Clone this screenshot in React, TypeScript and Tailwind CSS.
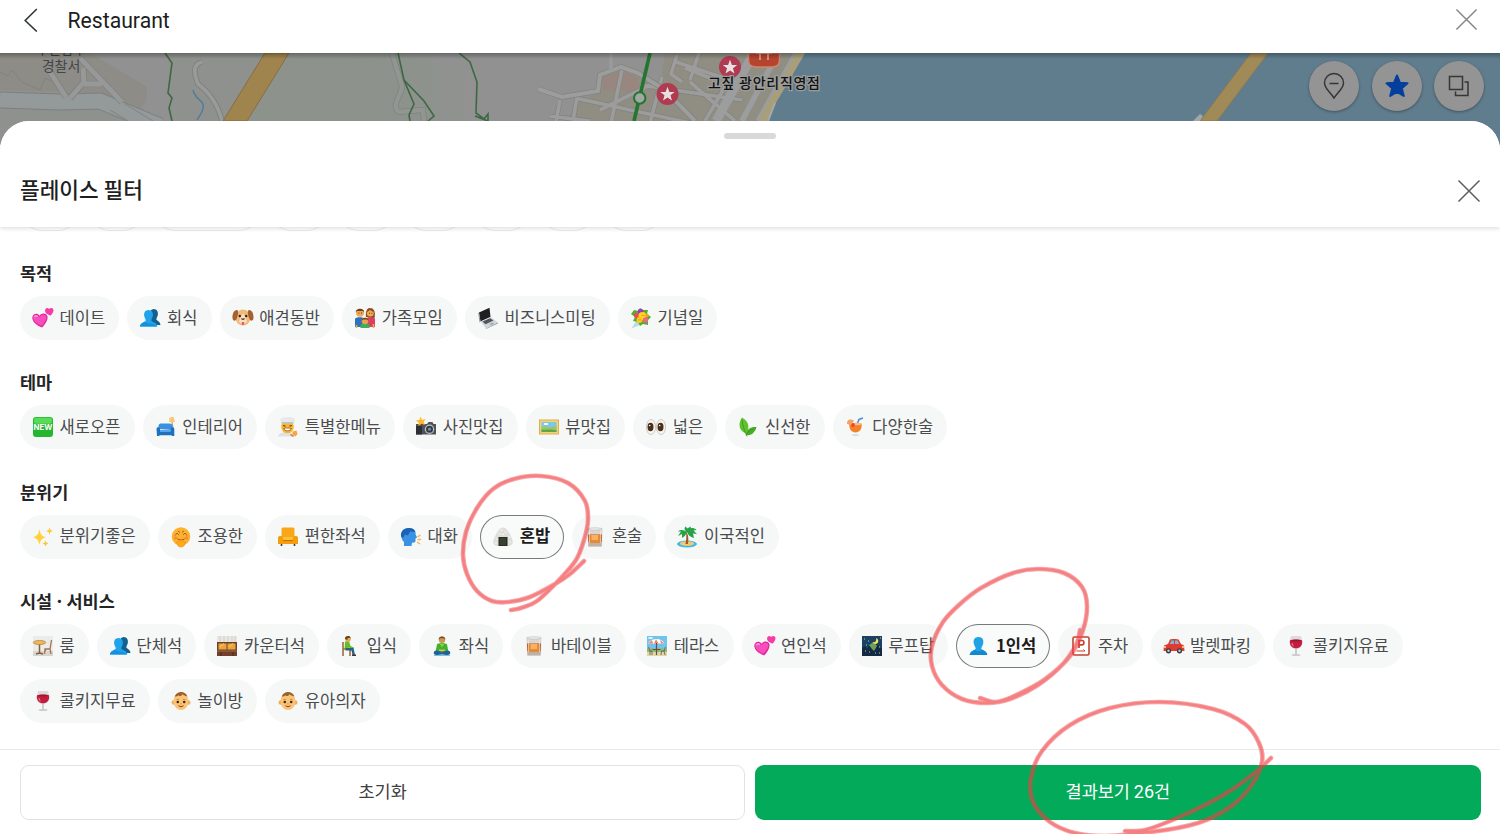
import React from "react";

const icons: Record<string, React.ReactNode> = {
  hearts: (
    <g transform="translate(-1 -1.800) scale(1.070)">
      <path d="M10.500 20.800C5 19 1.200 15.500 1.200 11.500 1.500 7.800 6 6.800 8 9.800 9.800 6.600 15 7 15.500 10.800 15.700 14.500 13 18 10.500 20.800Z" fill="#dc2a9a" />
      <path d="M9.800 19.300C5 17.300 2 14.500 2 11.500 2.200 8.800 5.800 8.300 8 11.200 9.800 8 13.800 8.200 14.300 11 14.500 14 12 17 9.800 19.300Z" fill="#fb4cbd" />
      <path d="M3.300 11.200C3.700 9.800 5.200 9.500 6.300 10.600" stroke="#ffa8e5" strokeWidth="1.200" fill="none" />
      <path d="M18.300 9.700C15 8.700 12.800 7 13.200 4.500 13.600 2.300 16 2 16.900 3.600 18.500 1.700 21.400 2.700 21 5.100 20.600 7.200 19.300 8.500 18.300 9.700Z" fill="#f73aa6" />
    </g>
  ),
  busts: (
    <>
      <path d="M14.500 2C18.200 2 19.300 5 18.800 8 18.500 10 17.300 11 17.300 12.500 18.500 14 21 14.200 21.500 18H12V3Z" fill="#14608f" />
      <path d="M9.500 3C13.200 3 14.300 6 13.800 9 13.500 11 12.300 12 12.300 13.600 13.500 15.500 17.800 15.500 18.300 19.500H1C1.400 15.700 5.500 15.500 6.800 13.600 6.800 12 5.500 11 5.200 9 4.800 6 5.800 3 9.500 3Z" fill="#21a3ec" />
      <path d="M1 19.500C1.400 16.500 4 15.800 6 14.800 8 17 14 16 18.300 19.500Z" fill="#1590df" />
    </>
  ),
  bust: (
    <>
      <path d="M10.500 2C14.800 2 15.800 5.200 15.200 8.500 14.800 10.800 13.300 12 13.300 14 15 15.500 18.800 15.800 19.300 20H1.700C2.200 15.800 6 15.500 7.700 14 7.700 12 6.200 10.800 5.800 8.500 5.200 5.200 6.200 2 10.500 2Z" fill="#1fa2e6" />
      <path d="M1.700 20C2.200 16.500 5 15.900 7 14.700 9 16.800 12 16.800 14 14.700 16 15.900 18.800 16.500 19.300 20Z" fill="#1388cd" />
    </>
  ),
  dog: (
    <>
      <ellipse cx="11" cy="10.500" rx="7.500" ry="8" fill="#eebb7d" />
      <path d="M5.500 3C2 2.500 .2 7 .5 11 .8 14.200 3.500 14.500 4.500 12 5.500 9.500 7 6 5.500 3Z" fill="#a4612f" />
      <path d="M16.500 3C20 2.500 21.800 7 21.500 11 21.200 14.200 18.500 14.500 17.500 12 16.500 9.500 15 6 16.500 3Z" fill="#a4612f" />
      <path d="M11 6.500C10 8.500 7.500 11 7.200 14.500 8 17.500 14 17.500 14.800 14.500 14.500 11 12 8.500 11 6.500Z" fill="#f9e0c0" />
      <circle cx="7.800" cy="9" r="1.200" fill="#332118" />
      <circle cx="14.200" cy="9" r="1.200" fill="#332118" />
      <path d="M9 11.500H13C13 13.300 9 13.300 9 11.500Z" fill="#32201a" />
      <path d="M9.800 15H12.200V17C12.200 18.500 9.800 18.500 9.800 17Z" fill="#ef5570" />
    </>
  ),
  family: (
    <>
      <path d="M1 20V12C1 9.500 10.500 9.500 10.500 12V20Z" fill="#2d72ba" />
      <path d="M12 20V12C12 9.500 21 9.500 21 12V20Z" fill="#dc3f5e" />
      <circle cx="6" cy="5.700" r="4" fill="#edab55" />
      <path d="M1.700 5.500C1.500 .5 10.500 .5 10.300 5.500L9 4H3Z" fill="#70401e" />
      <path d="M12 10C11 1 16 1 16.500 1.500 21 1 21.500 7 20.500 11Z" fill="#8d4a21" />
      <circle cx="16.300" cy="6" r="3.500" fill="#edab55" />
      <path d="M12.500 5.500 16 3 20 5.500 18.500 1.500 14 1.500Z" fill="#8d4a21" />
      <path d="M6.500 21V18C7 16 15 16 15.500 18V21Z" fill="#3fae58" />
      <circle cx="11" cy="14" r="3.300" fill="#e9a34e" />
      <path d="M7.500 14C7.500 9.500 14.500 9.500 14.500 14L13 12.500H9Z" fill="#70401e" />
      <path d="M4.500 6h.8M7 6h.8M15 6.300h.8M17.500 6.300h.8" stroke="#3c2415" />
      <path d="M2.500 18V21M19.500 17V21" stroke="#edab55" strokeWidth="1.600" />
    </>
  ),
  laptop: (
    <>
      <path d="M2 5.500 12.500 .8 13.500 10 3.500 14.500Z" fill="#1d1f23" />
      <path d="M2 5.500 3.500 14.500 2.600 15.500 1.300 6.500Z" fill="#8b9197" />
      <path d="M3.500 14.500 13.500 10 21 15.500 9 21.500Z" fill="#cfd6dc" />
      <path d="M5.500 14.500 13.200 11.200 16.500 13.500 8.500 17.200Z" fill="#50565e" />
      <path d="M12.500 17 15.500 15.600 17 16.700 14 18.200Z" fill="#9da5ad" />
      <path d="M9 21.500 21 15.500V16.500L9 22Z" fill="#8f98a1" />
    </>
  ),
  bouquet: (
    <>
      <path d="M7 13 12 17 1.500 21.500Z" fill="#b6dbe2" />
      <path d="M4 3 8 4 10 1 13 3 18 3 17 7 21 10 18 13 18 18 13 17 10 19 8 15 3 14 5 10 1 7Z" fill="#4eae2e" />
      <circle cx="10.500" cy="4.500" r="2.800" fill="#a538b9" />
      <circle cx="6.500" cy="8.500" r="2.600" fill="#ee4a55" />
      <circle cx="12.500" cy="9" r="4" fill="#ffd322" />
      <circle cx="9.500" cy="13" r="3" fill="#ffc61b" />
      <circle cx="15.500" cy="13" r="2.700" fill="#f4658e" />
      <circle cx="17" cy="8.500" r="1.800" fill="#f8a11e" />
      <path d="M11.500 8.500h3M8.500 12.800h2.500" stroke="#f2a010" />
    </>
  ),
  new: (
    <>
      <rect x="1" y="1" width="20" height="20" rx="3" fill="#22b72e" />
      <rect x="2" y="1.800" width="18" height="6" rx="2" fill="#58dc58" />
      <text x="11" y="13.800" textAnchor="middle" fontFamily="Inter, sans-serif" fontWeight="700" fontSize="7.800" fill="#fff">NEW</text>
    </>
  ),
  couch: (
    <>
      <path d="M14.500 1.500 18.500 .8 20 6 14 6Z" fill="#f7ca72" />
      <path d="M17 6 18 12" stroke="#bd8c47" />
      <path d="M3.500 13V10C3.500 8 5 7.500 6.500 7.500H14.500C16.500 7.500 17.500 8.500 17.500 10.500V14Z" fill="#3b91df" />
      <path d="M1.500 13C1.500 10.500 5 10.500 5 13V15H15.500V13C15.500 10.500 19.300 10.500 19.300 13V20H16.800V19.300H4.500V20H2Z" fill="#1d71bd" />
      <path d="M5 14H15.500V16H5Z" fill="#52a6ed" />
    </>
  ),
  chef: (
    <>
      <path d="M1 20.500C2 16.500 7 16 10.500 16 14 16 17 17.500 17.500 20.500Z" fill="#dfe1e3" />
      <circle cx="10.500" cy="11" r="6.300" fill="#f9b733" />
      <path d="M4.500 6.500 3 4C3.500 1.500 7 .8 10.500 1.300 14 .6 17.500 1.800 18 4L16.500 6.500Z" fill="#e6e8ea" />
      <path d="M4.300 6H16.700V7.600H4.300Z" fill="#bcc3c9" />
      <path d="M6 9.500 8.500 10.200M12.500 10.200 15 9.500" stroke="#6b431b" strokeWidth="1.200" />
      <path d="M6.500 12.500C8.500 11.800 12.500 11.800 14.500 12.500 13.500 15.500 7.500 15.500 6.500 12.500Z" fill="#fff" stroke="#8e4f22" strokeWidth=".8" />
      <path d="M15.500 15.500 19.500 14.500 20.500 18 18.500 20.500 15.500 18.500Z" fill="#f6a73c" />
      <path d="M13.500 18.500 16.500 20.500" stroke="#ef6a2d" strokeWidth="1.500" fill="none" />
    </>
  ),
  camera: (
    <>
      <path d="M1 8H4L5 6.500H8L9 8H12L13.500 6H17.500L18.500 8H21V18.500H1Z" fill="#4f5257" />
      <path d="M1 10H7V18.500H1Z" fill="#2c2f33" />
      <circle cx="14.500" cy="13.200" r="4.700" fill="#bdc3c8" />
      <circle cx="14.500" cy="13.200" r="3.500" fill="#303842" />
      <circle cx="14.500" cy="13.200" r="1.600" fill="#6f8ba5" />
      <path d="M5.500 .5 7 4 10.500 3 8.700 6 10 9 6.500 7.800 3.500 10 3.600 6.500 .8 4.500 4.400 4Z" fill="#ffb72a" />
    </>
  ),
  picture: (
    <>
      <rect x="1" y="3.500" width="20" height="15" fill="#e0b04a" />
      <rect x="2" y="4.500" width="18" height="13" fill="#f2d27b" />
      <rect x="3.500" y="6" width="15" height="10" fill="#7cc6e6" />
      <path d="M3.500 11C8 9 12 13 18.500 10V16H3.500Z" fill="#9ac75f" />
      <path d="M3.500 13.500C8 14.500 13 12.500 18.500 14.500V16H3.500Z" fill="#62a548" />
      <ellipse cx="8" cy="8" rx="2.500" ry=".9" fill="#fff" />
    </>
  ),
  eyes: (
    <>
      <ellipse cx="6" cy="11" rx="4.600" ry="7.500" fill="#f8f5ef" stroke="#d0c9c0" />
      <ellipse cx="16" cy="11" rx="4.600" ry="7.500" fill="#f8f5ef" stroke="#d0c9c0" />
      <ellipse cx="5.500" cy="11" rx="3" ry="4.200" fill="#49301d" />
      <ellipse cx="15.500" cy="11" rx="3" ry="4.200" fill="#49301d" />
      <circle cx="4.700" cy="9.500" r=".8" fill="#fff" />
      <circle cx="14.700" cy="9.500" r=".8" fill="#fff" />
    </>
  ),
  leaf: (
    <>
      <path d="M5 1.500C12.500 6 12.500 11.500 9.500 17.500 2 15.500 .5 8 5 1.500Z" fill="#5fc12c" />
      <path d="M19.500 11C14.500 10.500 9 13 9 19 14.500 20.500 18.500 15.500 19.500 11Z" fill="#48ac25" />
      <path d="M5 3.500C5.500 9 7 14 10 20.500M9.500 18.500C11 15.500 13 14 16.500 13" fill="none" stroke="#3a9425" strokeWidth=".8" />
    </>
  ),
  cocktail: (
    <>
      <path d="M11 11 14 3.500 18 2" fill="none" stroke="#4a91d6" strokeWidth="1.600" />
      <path d="M2 8C1.500 3.500 6 2.500 9 4.500L6 9Z" fill="#f7a067" />
      <path d="M4.500 7.500H16.500C17.500 12.500 14.500 16.500 10.500 16.500 6.500 16.500 3.500 12.500 4.500 7.500Z" fill="#f58128" />
      <ellipse cx="10.500" cy="8" rx="6" ry="1.300" fill="#f9b988" />
      <circle cx="8" cy="9" r="1.900" fill="#ed4730" />
      <ellipse cx="10.500" cy="19" rx="3.700" ry="1" fill="#d2e0ee" />
    </>
  ),
  sparkles: (
    <>
      <path d="M7.500 3C8.500 8.500 9.500 10 14 11.200 9.500 12.500 8.500 14 7.500 19 6.500 14 5 12.500 1 11.200 5 10 6.500 8.500 7.500 3Z" fill="#ffd23b" />
      <path d="M17.500 1.500 18.400 4.100 21 5 18.400 5.900 17.500 8.500 16.600 5.900 14 5 16.600 4.100ZM13.500 14.500 14.400 16.600 16.500 17.500 14.400 18.400 13.500 20.500 12.600 18.400 10.500 17.500 12.600 16.600Z" fill="#fac733" />
    </>
  ),
  quiet: (
    <>
      <circle cx="11" cy="10.500" r="9.300" fill="#fdb22b" />
      <path d="M5 9.500 7 7 9 9M13 9 15 7 17 9.500M8 5 10 6.500M12 6.500 14 5" fill="none" stroke="#a8651f" strokeWidth="1" />
      <circle cx="5.500" cy="12" r="1.800" fill="#f78a4c" />
      <circle cx="16.500" cy="12" r="1.800" fill="#f78a4c" />
      <path d="M7.500 12.800C9 14.500 13 14.500 14.500 12.800" fill="none" stroke="#a1531b" />
      <path d="M6.500 16 11 14 15.500 16 14 19.800C12 21.500 9.500 21.300 8 19.800Z" fill="#ffa81b" stroke="#ec9118" strokeWidth=".7" />
    </>
  ),
  armchair: (
    <>
      <path d="M4.500 3C4.500 1.800 5.500 1.500 7 1.500H15C16.500 1.500 17.500 1.800 17.500 3V12H4.500Z" fill="#f9a718" />
      <path d="M6 11H16V15H6Z" fill="#ffc037" />
      <path d="M1 11.500C1 9.500 6 9.500 6 11.500V14H16V11.500C16 9.500 21 9.500 21 11.500V18H1Z" fill="#f49e0c" />
      <path d="M6 14.500H16" stroke="#c96d0b" />
      <path d="M4.500 18V20M17.500 18V20" stroke="#5d3215" strokeWidth="1.600" />
    </>
  ),
  speaking: (
    <>
      <path d="M9 2C15 2 16 6 15.500 8L17 11.500 15.500 12.500 15.500 15C15.500 16.500 13.500 17 12 16.500L11.500 20H4V16C-.5 12 0 2 9 2Z" fill="#3b92e3" />
      <path d="M9 2C3 2 .5 6 1 10.500L3 12 5 8.500 8 9.500 10 5.500 15 6C14.500 3 12 2 9 2Z" fill="#1b62b4" />
      <path d="M17.500 11 20.500 9M17.500 13.500H21M17 16 20 18" stroke="#f4b553" strokeWidth="1.500" />
    </>
  ),
  riceball: (
    <>
      <path d="M11 1.500C14.500 1.500 17 6 20 12.500 22 17.500 20 19.500 17 20H5C2 19.500 0 17.500 2 12.500 5 6 7.500 1.500 11 1.500Z" fill="#dededa" />
      <path d="M6.500 11H15.500V20H6.500Z" fill="#272e22" />
      <path d="M8 12H14V19H8Z" fill="#364132" />
      <path d="M9 4h1M13 6h1M7 8h1M4 13h1M17 11h1M10.500 8.500h1M3.500 17h1M17.500 16h1" stroke="#fbfbf8" strokeLinecap="round" />
    </>
  ),
  whisky: (
    <>
      <path d="M3.500 2.500H18.500L18 20.500H4Z" fill="#d9d6d4" />
      <path d="M4 8.500H18L17.700 16.500H4.300Z" fill="#b9602c" />
      <path d="M5.500 8.500H16.500V17H5.500Z" fill="#e58a36" />
      <path d="M7.500 9H14V14H7.500Z" fill="#f9b163" />
      <path d="M5.500 4V19M16.500 4V19" stroke="#f0eeec" strokeWidth=".6" />
      <ellipse cx="11" cy="3" rx="7.300" ry="1.200" fill="#ececec" stroke="#bcbcbc" strokeWidth=".6" />
      <path d="M4.300 17H17.700L17.500 20.500H4.500Z" fill="#bdb1a8" />
    </>
  ),
  island: (
    <>
      <ellipse cx="11" cy="18" rx="10" ry="3.500" fill="#42b8e5" />
      <ellipse cx="11" cy="17.500" rx="7" ry="2.300" fill="#f2ca73" />
      <path d="M10 6C13 9 12.500 14 12 18H9.500C10.500 14 10.500 9 10 6Z" fill="#a15728" />
      <path d="M11 6C8 4 5 3 2 5.500L5 5.500 2 10 6 8 6 12C8 11 10 9 11 6ZM11 6C12 2 17 .5 20.500 4L17.500 4.500 21 8 17 7.500 18 12C14 11 12 9 11 6ZM11 6C8 4 8 1.500 10 .5L11 2.500 15 .5C15 3 13 5 11 6Z" fill="#26a247" />
    </>
  ),
  table: (
    <>
      <rect x="1" y="1" width="20" height="20" fill="#ebebe9" />
      <path d="M1 16H21V21H1Z" fill="#d8d6d1" />
      <path d="M7.500 8V18L4 19M7.500 18 11 19" fill="none" stroke="#88603d" strokeWidth="1.500" />
      <ellipse cx="7.500" cy="7.500" rx="6.200" ry="2" fill="#eeb95c" stroke="#b98240" strokeWidth=".8" />
      <path d="M19.500 5 18 14H13L12.500 19M18 14 19 19M13 14 13.800 16" fill="none" stroke="#a57551" strokeWidth="1.300" />
    </>
  ),
  counter: (
    <>
      <rect x="1" y="1" width="20" height="20" fill="#e9e7e3" />
      <path d="M4 1V7M8 1V7M12 1V7M16 1V7M19 1V7" stroke="#d3cec7" />
      <rect x="1" y="7" width="20" height="14" fill="#70422e" />
      <rect x="2.500" y="8.500" width="8" height="6" fill="#e9a63a" />
      <rect x="11.500" y="8.500" width="8" height="6" fill="#e9a63a" />
      <path d="M1 16H21" stroke="#a56a40" />
      <path d="M4 12 8 8.500M13 12 17 8.500" stroke="#ffcf65" />
      <path d="M5 17V21M17 17V21" stroke="#4a2b20" />
    </>
  ),
  sitting: (
    <>
      <path d="M4 7V21M4 14H11V21" fill="none" stroke="#a16b3c" strokeWidth="1.600" />
      <path d="M6 6.500 10 6 11.500 11 15 12.500 14.500 14 9.500 12.500 10 15H5.500Z" fill="#66bd24" />
      <path d="M6.500 13H14.500L16 20H13.500L12.500 15.500H6.500Z" fill="#23618e" />
      <path d="M13 19.500H17V21H13Z" fill="#4a3324" />
      <circle cx="9" cy="3.800" r="2.900" fill="#e5a85c" />
      <path d="M6 4C5.500 .5 11.500 0 11.500 3L8.500 3V5Z" fill="#68401f" />
    </>
  ),
  lotus: (
    <>
      <path d="M6 9.500C7.500 7.500 14.500 7.500 16 9.500L17.500 17H4.500Z" fill="#42b12b" />
      <path d="M8.500 8.500 11 12.500 13.500 8.500Z" fill="#7fd252" />
      <circle cx="11" cy="4.700" r="3.200" fill="#cf9353" />
      <path d="M7.700 4.700C7.200 .3 14.800 .3 14.300 4.700L13 3.200H9Z" fill="#754a24" />
      <path d="M3.500 16C6 14.500 9 16.500 11 17.300 13 16.500 16 14.500 18.500 16 21 20 17 20.500 11 19.500 5 20.500 1 20 3.500 16Z" fill="#1d6299" />
      <path d="M8 15.300H14" stroke="#efb56b" strokeWidth="1.400" />
      <path d="M3 20.500H19" stroke="#5aaedb" strokeWidth=".8" />
    </>
  ),
  terrace: (
    <>
      <rect x="1" y="1" width="20" height="20" fill="#6fc4ee" />
      <path d="M1 13.500H21V21H1Z" fill="#86bb78" />
      <path d="M1 17H21V21H1Z" fill="#dcd8ae" />
      <path d="M2 8.500C4 5 8 4 10.500 4 14 4 17 5.500 18.500 8.500Z" fill="#fff" />
      <path d="M2 8.500 6 5 7 8.500ZM10 4 12.500 8.500H8ZM14 5 18.500 8.500H15Z" fill="#f18367" />
      <path d="M10.500 8V20M6.500 14.500H14.500" fill="none" stroke="#754936" strokeWidth="1.200" />
      <path d="M19.500 12 18 16H15.500M18 16 19 20M15.500 16 15 20M2.500 12 4 16H6V20M4 16V20" fill="none" stroke="#8a5a41" strokeWidth=".9" />
      <ellipse cx="4.500" cy="3" rx="2.500" ry="1" fill="#e6f5fb" />
    </>
  ),
  rooftop: (
    <>
      <rect x="1" y="1" width="20" height="20" fill="#1c4163" />
      <path d="M1 13 4 11 6 14 9 10 12 13 16 9 21 14V21H1Z" fill="#142a42" />
      <path d="M8 10 13 7 16 11 13 16 11 14Z" fill="#6da05a" />
      <path d="M15 3C18 4 18 8 15 9 13 9 12 8 11.500 7 14 8 16 6 15 3Z" fill="#f6e34e" />
      <path d="M3 4h1M7 6h1M19 3h1M5 10h1M18 12h1M8 17h1M14 18h1M4 16h1M18 18h1" stroke="#a6d1ca" />
    </>
  ),
  parking: (
    <>
      <rect x="3" y="2" width="16" height="18" rx="1.500" fill="#fff" stroke="#c54331" strokeWidth="1.600" />
      <path d="M9 13V5.500H12C14.500 5.500 14.500 9.800 12 9.800H9" fill="none" stroke="#c54331" strokeWidth="1.700" />
      <path d="M6.500 16H15M13.500 14.500 15 16" fill="none" stroke="#c54331" />
    </>
  ),
  car: (
    <>
      <path d="M5 9 7 4.500C7.500 3.800 14.500 3.800 15.500 4.500L18 9 21 10.500 21.500 16H.5L1 10.500Z" fill="#df3b32" />
      <path d="M6.800 9 8.300 5.500H11V9ZM12 5.500H14.500L16.300 9H12Z" fill="#7fb5d6" />
      <circle cx="5.500" cy="15.800" r="2.600" fill="#343d47" />
      <circle cx="16.500" cy="15.800" r="2.600" fill="#343d47" />
      <circle cx="5.500" cy="15.800" r="1.200" fill="#c3ccd1" />
      <circle cx="16.500" cy="15.800" r="1.200" fill="#c3ccd1" />
      <path d="M1 12H3M19 12H21" stroke="#ffe27c" strokeWidth="1.300" />
    </>
  ),
  wine: (
    <>
      <path d="M6 1H16L17.500 7C17.800 11.500 14 14 11 14 8 14 4.200 11.500 4.500 7Z" fill="#dddadc" />
      <path d="M5 5.500C7 4.300 15 4.300 17 5.500 18 10.500 14.500 13.300 11 13.300 7.500 13.300 4 10.500 5 5.500Z" fill="#c41c3e" />
      <path d="M5.200 5.500C7 4.500 15 4.500 16.800 5.500 15 6.800 7 6.800 5.200 5.500Z" fill="#a3142f" />
      <path d="M7 8C7 9.500 7.500 10.500 8.500 11" stroke="#ee7088" strokeWidth="1.200" fill="none" />
      <path d="M11 14V19.500" stroke="#b9b7ba" strokeWidth="1.300" />
      <ellipse cx="11" cy="20" rx="4.500" ry="1" fill="#cbcbcd" />
    </>
  ),
  baby: (
    <>
      <circle cx="3.800" cy="12.500" r="2.300" fill="#f0ad60" />
      <circle cx="18.200" cy="12.500" r="2.300" fill="#f0ad60" />
      <path d="M11 2.500C16.500 2.500 18.300 7 18.300 11.500 18.300 17 14.500 20 11 20 7.500 20 3.700 17 3.700 11.500 3.700 7 5.500 2.500 11 2.500Z" fill="#fac476" />
      <path d="M4.800 6.500C6.300 3 9 2 11 2 14 2 16.500 3.500 17.300 6.500 15 6 13.500 4.800 12 4.200 12.200 6 9.800 6.800 8.800 5.200 7.500 6.300 6 6.500 4.800 6.500Z" fill="#9b602d" />
      <path d="M6.500 9.500H9M13 9.500H15.500" stroke="#b97b3c" strokeWidth=".7" />
      <circle cx="7.800" cy="12" r="1.300" fill="#3d2718" />
      <circle cx="14.200" cy="12" r="1.300" fill="#3d2718" />
      <path d="M8.500 15.500C9.800 17 12.200 17 13.500 15.500" fill="none" stroke="#97461e" strokeWidth="1.100" />
      <circle cx="11" cy="13.700" r=".7" fill="#e08a39" />
    </>
  ),
};

type ChipData = { icon: string; label: string; on?: boolean };

const sections: { title: string; chips: ChipData[] }[] = [
  {
    title: "목적",
    chips: [
      { icon: "hearts", label: "데이트" },
      { icon: "busts", label: "회식" },
      { icon: "dog", label: "애견동반" },
      { icon: "family", label: "가족모임" },
      { icon: "laptop", label: "비즈니스미팅" },
      { icon: "bouquet", label: "기념일" },
    ],
  },
  {
    title: "테마",
    chips: [
      { icon: "new", label: "새로오픈" },
      { icon: "couch", label: "인테리어" },
      { icon: "chef", label: "특별한메뉴" },
      { icon: "camera", label: "사진맛집" },
      { icon: "picture", label: "뷰맛집" },
      { icon: "eyes", label: "넓은" },
      { icon: "leaf", label: "신선한" },
      { icon: "cocktail", label: "다양한술" },
    ],
  },
  {
    title: "분위기",
    chips: [
      { icon: "sparkles", label: "분위기좋은" },
      { icon: "quiet", label: "조용한" },
      { icon: "armchair", label: "편한좌석" },
      { icon: "speaking", label: "대화" },
      { icon: "riceball", label: "혼밥", on: true },
      { icon: "whisky", label: "혼술" },
      { icon: "island", label: "이국적인" },
    ],
  },
  {
    title: "시설 · 서비스",
    chips: [
      { icon: "table", label: "룸" },
      { icon: "busts", label: "단체석" },
      { icon: "counter", label: "카운터석" },
      { icon: "sitting", label: "입식" },
      { icon: "lotus", label: "좌식" },
      { icon: "whisky", label: "바테이블" },
      { icon: "terrace", label: "테라스" },
      { icon: "hearts", label: "연인석" },
      { icon: "rooftop", label: "루프탑" },
      { icon: "bust", label: "1인석", on: true },
      { icon: "parking", label: "주차" },
      { icon: "car", label: "발렛파킹" },
      { icon: "wine", label: "콜키지유료" },
      { icon: "wine", label: "콜키지무료" },
      { icon: "baby", label: "놀이방" },
      { icon: "baby", label: "유아의자" },
    ],
  },
];

function Chip({ icon, label, on }: ChipData) {
  return (
    <button
      className={
        on
          ? "flex h-11 items-center rounded-full bg-[#f9fafa] pr-[14.200px] pl-[12.400px] text-[16.550px] font-bold text-[#1b1b1b] ring-1 ring-[#77797b] ring-inset"
          : "flex h-11 items-center rounded-full bg-[#f6f8f8] pr-[14.200px] pl-[12.400px] text-[16.550px] text-[#4a4b4c]"
      }
    >
      <svg className="mr-[5.600px] -ml-[.4px] size-[22px] shrink-0" viewBox="0 0 22 22">
        {icons[icon]}
      </svg>
      <span className="-mt-[3px] leading-6">{label}</span>
    </button>
  );
}

function Close({ className }: { className: string }) {
  return (
    <svg className={className} viewBox="0 0 24 24" fill="none" stroke="currentColor" strokeWidth="1.500">
      <path d="M1.500 1.500 22.500 22.500M22.500 1.500 1.500 22.500" />
    </svg>
  );
}

const STAR = "M0-6.200 1.600-2 6-1.900 2.500.8 3.700 5.100 0 2.600-3.700 5.100-2.500.8-6-1.900-1.600-2Z";

function MapView() {
  return (
    <svg className="block h-[92px] w-full" viewBox="0 53 1500 92">
      <defs>
        <linearGradient id="shade" x1="0" y1="0" x2="0" y2="1">
          <stop offset="0" stopColor="#000" stopOpacity=".28" />
          <stop offset="1" stopColor="#000" stopOpacity="0" />
        </linearGradient>
        <linearGradient id="hill" x1="0" y1="0" x2="1" y2="0">
          <stop offset="0" stopColor="#8c938b" />
          <stop offset=".75" stopColor="#8d928c" />
          <stop offset="1" stopColor="#929292" />
        </linearGradient>
        <clipPath id="town">
          <path d="M535 145 560 98 598 92 598 78 622 53H800L765 145Z" />
        </clipPath>
      </defs>
      <rect y="53" width="1500" height="92" fill="#919191" />
      <path d="M140 53H265L225 120 215 145H0V110L120 105 150 115 172 122 168 53Z" fill="#8e918d" />
      <path d="M288 53H400L480 75V145H235Z" fill="url(#hill)" />
      <path d="M460 53 470 68 475 100 487 121H510L500 53Z" fill="#909190" />
      <path d="M0 53H90L147 87V100L140 110 118 98 60 92 0 90Z" fill="#8e8c86" />
      <path d="M0 72 8 76 12 70 22 82 40 90 45 78 53 82 60 90" fill="none" stroke="#84827d" />
      <path d="M0 100 60 102 100 101 160 126" fill="none" stroke="#7c7f7f" strokeWidth="17" />
      <path d="M0 100 60 102 100 101 160 126" fill="none" stroke="#949999" strokeWidth="15" />
      <g fill="none" stroke="#828280" strokeWidth="6.500">
        <path d="M50 72 66 97M80 58 122 102M83 68 84 82 70 98M84 84H102" />
      </g>
      <g fill="none" stroke="#979999" strokeWidth="4.800">
        <path d="M50 72 66 97M80 58 122 102M83 68 84 82 70 98M84 84H102" />
      </g>
      <path d="M110 110 128 121M125 104 153 121" stroke="#828483" />
      <path d="M202 62C190 65 196 78 198 84 210 93 218 105 222 121" fill="none" stroke="#7f7f7d" strokeWidth="5.500" />
      <path d="M202 62C190 65 196 78 198 84 210 93 218 105 222 121" fill="none" stroke="#999b9b" strokeWidth="3.800" />
      <path d="M165 53 172 63 168 93 172 98 169 108 172 121" fill="none" stroke="#3e6844" strokeWidth="1.600" />
      <path d="M193 90C196 104 212 98 197 120" fill="none" stroke="#517d96" strokeWidth="1.400" />
      <path d="M265 53H289L247 121H223Z" fill="#a0844e" stroke="#8a6c40" />
      <path d="M392 53 402 86C402 96 390 105 399 112L423 110 424 121" fill="none" stroke="#7f837f" strokeWidth="6" />
      <path d="M392 53 402 86C402 96 390 105 399 112L423 110 424 121" fill="none" stroke="#919692" strokeWidth="4.500" />
      <g fill="none" stroke="#3e6844" strokeWidth="1.600">
        <path d="M398 53 404 80 414 104 409 115 410 121M404 80 424 101 434 116 428 121" />
        <path d="M459 53 470 62 477 82 476 113 484 119 488 114 488 121 475 116" />
      </g>
      <path d="M555 145 575 105 598 92 598 78 622 70 660 85 665 53H800L765 145Z" fill="#908d83" />
      <path d="M602 78 622 71 622 90 604 90ZM622 70 637 78 640 96 620 89Z" fill="#99867e" />
      <g clipPath="url(#town)" fill="none">
        <g stroke="#82827d" strokeWidth="5">
          <path d="M575 98 695 124M622 70 611 123M662 77 650 123M640 85 742 100M677 55 671 74 682 82M600 110 650 85M690 82 735 121M700 50 690 80M730 78 705 121M676 62 730 80M560 100 556 122M577 97 573 121M685 68 710 78M540 115 590 121" />
        </g>
        <g stroke="#9b9c9b" strokeWidth="3.700">
          <path d="M575 98 695 124M622 70 611 123M662 77 650 123M640 85 742 100M677 55 671 74 682 82M600 110 650 85M690 82 735 121M700 50 690 80M730 78 705 121M676 62 730 80M560 100 556 122M577 97 573 121M685 68 710 78M540 115 590 121" />
        </g>
        <g stroke="#9b9d9e">
          <path d="M754 53 716 121" strokeWidth="9" />
          <path d="M778 53 742 121" strokeWidth="5.500" />
          <path d="M796 53 758 121" strokeWidth="5" />
        </g>
      </g>
      <path d="M538 89 562 97 598 91 600 75 621 67 638 73 665 90 695 121" fill="none" stroke="#82827f" strokeWidth="5.500" />
      <path d="M538 89 562 97 598 91 600 75 621 67 638 73 665 90 695 121" fill="none" stroke="#9c9d9d" strokeWidth="4" />
      <path d="M611 71V53" stroke="#9a9a9a" strokeWidth="3.500" />
      <path d="M805 53H1500V145H760L775 104Z" fill="#607d8e" />
      <path d="M805 53 793 74 787 84 774 106 768 121H758L796 53Z" fill="#a89e7a" />
      <path d="M775 103 768 121" stroke="#a3abad" strokeWidth="2" />
      <path d="M650 53 634 121" stroke="#23752f" strokeWidth="3.600" />
      <circle cx="639.700" cy="98" r="5.700" fill="#a3a7a3" stroke="#23752f" strokeWidth="2" />
      <path d="M1251 53H1268L1217 121H1200Z" fill="#a08a58" stroke="#8d7953" />
      <path d="M1193 121 1200 114 1203 116 1200 121Z" fill="#a1a7aa" />
      <g>
        <circle cx="667.500" cy="94" r="11" fill="#b03a50" />
        <path d={STAR} transform="translate(667.500 94.300) scale(1.200)" fill="#e6e0e0" />
        <circle cx="730" cy="67" r="11" fill="#b03a50" />
        <path d={STAR} transform="translate(730 67.300) scale(1.200)" fill="#e6e0e0" />
      </g>
      <path d="M748.500 53H779.500V60Q779.500 67 772 67H756Q748.500 67 748.500 60Z" fill="#b5442f" stroke="#d08470" strokeWidth="1.500" />
      <path d="M760 53V60M768 53V60M756 53H772" stroke="#e3a897" strokeWidth="1.500" />
      <g fontFamily="'Noto Sans CJK KR', sans-serif" textAnchor="middle">
        <text x="61" y="54" fontSize="13.500" fill="#3e4044">부산남부</text>
        <text x="61" y="71" fontSize="14" fill="#42464c">경찰서</text>
        <text x="764" y="88" fontSize="14" fontWeight="500" fill="#111" stroke="#9b9d9c" strokeWidth="2.500" paintOrder="stroke" textLength="112">
          고짚 광안리직영점
        </text>
      </g>
      <rect y="53" width="1500" height="6" fill="url(#shade)" />
    </svg>
  );
}

function MapButton({ children }: { children: React.ReactNode }) {
  return (
    <button className="flex size-[50px] items-center justify-center rounded-full bg-[#949494] shadow-[0_1px_3px_rgba(0,0,0,0.35)]">
      <svg className="size-7" viewBox="0 0 28 28" fill="none" stroke="#363636" strokeWidth="1.500">
        {children}
      </svg>
    </button>
  );
}

type Pt = [number, number];

function smooth(p: Pt[]): string {
  let d = `M${p[0][0]} ${p[0][1]}`;
  for (let i = 0; i < p.length - 1; i++) {
    const a = p[Math.max(i - 1, 0)];
    const b = p[i];
    const c = p[i + 1];
    const e = p[Math.min(i + 2, p.length - 1)];
    d += `C${b[0] + (c[0] - a[0]) / 6} ${b[1] + (c[1] - a[1]) / 6} ${c[0] - (e[0] - b[0]) / 6} ${c[1] - (e[1] - b[1]) / 6} ${c[0]} ${c[1]}`;
  }
  return d;
}

const strokes: Pt[][] = [
  [[511, 610], [521, 608], [537, 601], [560, 579], [576, 560], [584, 540], [588, 520], [585, 501], [568, 483], [541, 476], [514, 479], [493, 489], [477, 508], [466, 532], [463, 555], [467, 574], [477, 591], [492, 601], [508, 602], [530, 597], [555, 584], [570, 574], [584, 561]],
  [[1080, 630], [1076, 645], [1062, 665], [1038, 685], [1010, 699], [987, 703], [962, 699], [942, 685], [932, 666], [932, 646], [943, 622], [960, 604], [981, 588], [1013, 573], [1038, 569], [1064, 573], [1082, 587], [1087, 606], [1083, 630], [1070, 656], [1044, 680], [1012, 697], [995, 702], [980, 698]],
  [[1271, 758], [1257, 771], [1233, 789], [1205, 805], [1175, 819], [1145, 830], [1125, 831], [1150, 832], [1198, 823], [1230, 807], [1251, 786], [1262, 762], [1259, 743], [1245, 724], [1213, 709], [1160, 702], [1110, 708], [1070, 725], [1042, 751], [1031, 778], [1033, 802], [1050, 822], [1075, 833], [1105, 836], [1140, 833]],
];

const hiddenChips = ["w-[60px]", "w-[57px]", "w-[108px]", "w-[60px]", "w-[59px]", "w-[61px]", "w-[58px]", "w-[57px]", "w-[60px]"];

export default function App() {
  return (
    <div className="relative flex h-[834px] w-[1500px] flex-col overflow-hidden bg-white font-['Noto_Sans_CJK_KR',sans-serif]">
      <header className="flex h-[53px] shrink-0 items-start bg-white pr-[22px] pl-[23px]">
        <svg className="mt-2 h-6 w-4" viewBox="0 0 16 24" fill="none" stroke="#30383a" strokeWidth="1.600">
          <path d="M13.800 1 2.200 12.500 13.800 23.500" />
        </svg>
        <h1 className="mt-[5px] ml-[28.500px] font-['Roboto',sans-serif] text-[21.200px] leading-8 text-[#1d1d1d]">Restaurant</h1>
        <Close className="mt-2 ml-auto size-[23px] text-[#858585]" />
      </header>

      <div className="relative h-[92px] shrink-0">
        <MapView />
        <div className="absolute top-[8px] right-4 flex gap-[12.500px]">
          <MapButton>
            <path d="M14 26C10 20 4.500 16.500 4.500 11A9.500 9.500 0 0 1 23.500 11C23.500 16.500 18 20 14 26ZM9.500 11.500H18.500" />
          </MapButton>
          <MapButton>
            <path d="M14 3.500 17 10.800 24.500 11.300 18.800 16.300 20.800 24 14 19.800 7.200 24 9.200 16.300 3.500 11.300 11 10.800Z" fill="#053f9e" stroke="#053f9e" strokeLinejoin="round" strokeWidth="2" />
          </MapButton>
          <MapButton>
            <path d="M4.500 4.500H17.500V17.500H4.500ZM19.500 10H23V23.500H10.500V19.500" />
          </MapButton>
        </div>
      </div>

      <main className="relative -mt-6 flex min-h-0 flex-1 flex-col overflow-hidden rounded-t-[29px] bg-white">
        <div className="z-10 flex h-[106px] shrink-0 flex-col bg-white shadow-[0_1px_5px_rgba(0,0,0,0.16)]">
          <div className="mx-auto mt-3 h-1.5 w-[52px] rounded-full bg-[#d9d9d9]" />
          <div className="mt-[33.500px] flex items-center justify-between pr-[19px] pl-5">
            <h2 className="text-[21.400px] leading-8 font-medium text-[#1e1e23]">플레이스 필터</h2>
            <Close className="mt-[5px] size-6 text-[#5c5c5c]" />
          </div>
        </div>

        <div className="flex min-h-0 flex-1 flex-col px-5">
          <div className="-mt-10 flex shrink-0 gap-2">
            {hiddenChips.map((w, i) => (
              <div key={i} className={`h-11 rounded-full border border-[#e9eaeb] bg-white ${w}`} />
            ))}
          </div>
          <div className="mt-[29px] flex flex-col gap-[29.400px]">
            {sections.map((s) => (
              <section key={s.title}>
                <h3 className="mb-[10.500px] h-[25.500px] text-[17.500px] leading-[25px] font-bold [word-spacing:-2px] text-[#242427]">{s.title}</h3>
                <div className="flex flex-wrap gap-x-[8px] gap-y-[11px]">
                  {s.chips.map((c) => (
                    <Chip key={c.label} {...c} />
                  ))}
                </div>
              </section>
            ))}
          </div>
        </div>

        <footer className="grid h-[85px] shrink-0 grid-cols-2 items-start gap-[10px] border-t border-[#e9eaeb] bg-white pt-[15px] pr-[19.500px] pl-5">
          <button className="h-[55px] rounded-[9px] border border-[#e1e2e4] pb-0.5 text-[17.500px] text-[#404040]">초기화</button>
          <button className="h-[55px] rounded-[9px] bg-[#03aa5a] pb-0.5 text-[17.500px] text-white">
            결과보기 <span className="font-['Roboto',sans-serif] text-[18px]">26</span>건
          </button>
        </footer>
      </main>

      <svg className="pointer-events-none absolute inset-0 z-20 size-full" viewBox="0 0 1500 834" fill="none" strokeLinecap="round" strokeLinejoin="round">
        {strokes.map((p, i) => (
          <g key={i} stroke="#f13f43">
            <path d={smooth(p)} strokeWidth="4.600" opacity=".48" />
            <path d={smooth(p)} strokeWidth="2.600" opacity=".35" />
          </g>
        ))}
      </svg>
    </div>
  );
}
